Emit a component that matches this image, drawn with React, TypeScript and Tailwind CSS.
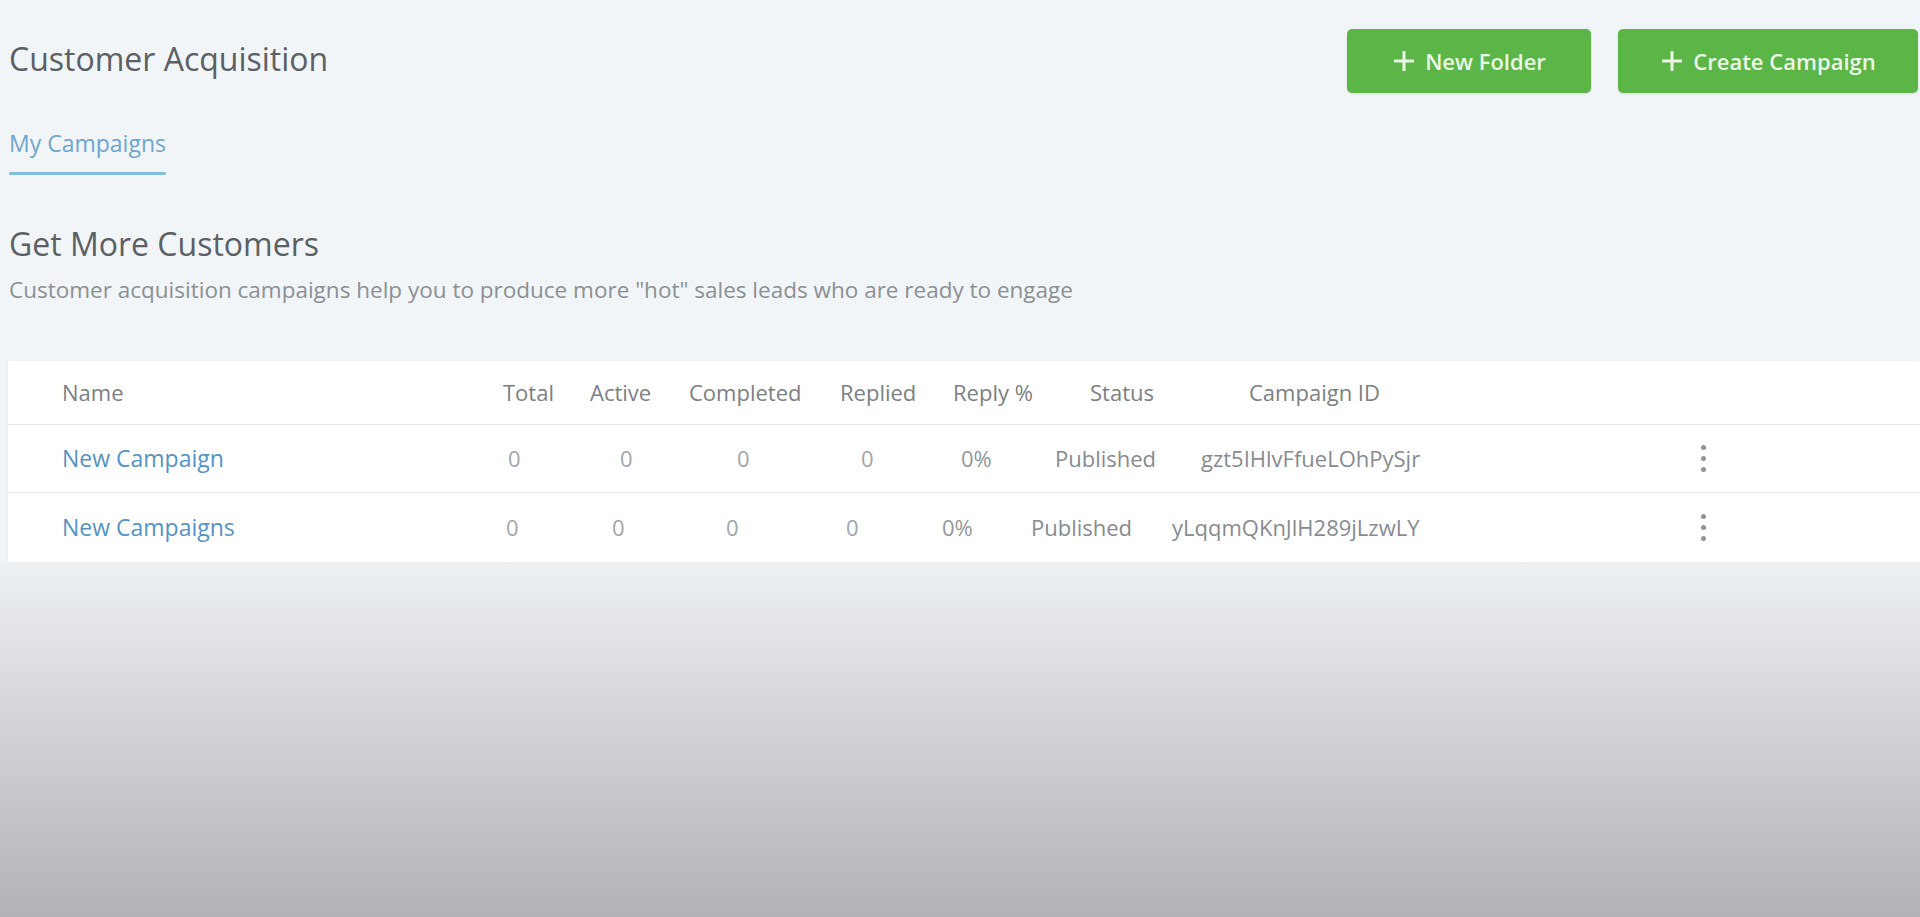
import { Fragment } from "react"

const font = { fontFamily: '"Open Sans", "Noto Sans", sans-serif' }

interface Campaign {
  name: string
  total: number
  active: number
  completed: number
  replied: number
  replyPct: string
  status: string
  campaignId: string
  widths: string[]
}

const campaigns: Campaign[] = [
  {
    name: "New Campaign",
    total: 0,
    active: 0,
    completed: 0,
    replied: 0,
    replyPct: "0%",
    status: "Published",
    campaignId: "gzt5IHlvFfueLOhPySjr",
    widths: ["w-[446px]", "w-[112px]", "w-[117px]", "w-[124px]", "w-[100px]", "w-[94px]", "w-[146px]", "w-[500px]"],
  },
  {
    name: "New Campaigns",
    total: 0,
    active: 0,
    completed: 0,
    replied: 0,
    replyPct: "0%",
    status: "Published",
    campaignId: "yLqqmQKnJlH289jLzwLY",
    widths: ["w-[444px]", "w-[106px]", "w-[114px]", "w-[120px]", "w-[96px]", "w-[89px]", "w-[141px]", "w-[529px]"],
  },
]

const headers = [
  { label: "Name", w: "w-[441px]" },
  { label: "Total", w: "w-[87px]" },
  { label: "Active", w: "w-[99px]" },
  { label: "Completed", w: "w-[151px]" },
  { label: "Replied", w: "w-[113px]" },
  { label: "Reply %", w: "w-[137px]" },
  { label: "Status", w: "w-[159px]" },
  { label: "Campaign ID", w: "w-[200px]" },
]

function PlusIcon() {
  return (
    <svg width="24" height="24" viewBox="0 0 24 24" fill="none" stroke="currentColor" strokeWidth="3" strokeLinecap="butt">
      <path d="M12 2v20M2 12h20" />
    </svg>
  )
}

function GreenButton({ label, width }: { label: string; width: string }) {
  return (
    <button
      className={`${width} flex h-[64px] items-center justify-center gap-[9px] rounded-[5px] bg-[#5cb547] text-[22px] font-semibold text-[#eaf7e6] shadow-[0_1px_2px_rgba(0,0,0,0.12)]`}
    >
      <PlusIcon />
      <span>{label}</span>
    </button>
  )
}

function Kebab() {
  return (
    <div className="flex flex-col items-center gap-[6px]">
      <span className="block h-[5px] w-[5px] rounded-full bg-[#8f9296]" />
      <span className="block h-[5px] w-[5px] rounded-full bg-[#8f9296]" />
      <span className="block h-[5px] w-[5px] rounded-full bg-[#8f9296]" />
    </div>
  )
}

export default function App() {
  return (
    <div className="flex min-h-[917px] w-[1920px] flex-col overflow-hidden bg-[#f2f5f7]" style={font}>
      <div className="pl-[9px]">
        {/* page header */}
        <div className="flex items-start justify-between pr-[2px] pt-[29px]">
          <h1 className="mt-[10px] text-[32px] leading-[40px] font-normal text-[#5b6065]">Customer Acquisition</h1>
          <div className="flex gap-[27px]">
            <GreenButton label="New Folder" width="w-[244px]" />
            <GreenButton label="Create Campaign" width="w-[300px]" />
          </div>
        </div>

        {/* tabs */}
        <div className="mt-[35px] flex">
          <div className="flex flex-col">
            <span className="text-[23px] leading-[30px] text-[#6ea6cd]">My Campaigns</span>
            <span className="mt-[14px] block h-[3px] w-full rounded-full bg-[#7fbfd9]" />
          </div>
        </div>

        {/* intro */}
        <h2 className="mt-[49px] text-[32px] leading-[40px] font-normal text-[#5b6065]">Get More Customers</h2>
        <p className="mt-[11px] text-[22.5px] leading-[30px] text-[#8b9094]">
          Customer acquisition campaigns help you to produce more "hot" sales leads who are ready to engage
        </p>
      </div>

      {/* table */}
      <div className="mt-[56px] ml-[8px] bg-white shadow-[0_1px_3px_rgba(0,0,0,0.08)]">
        <div className="flex h-[64px] items-center border-b border-[#e6e9ec] pl-[54px] text-[22px] text-[#7b8084]">
          {headers.map((h) => (
            <div key={h.label} className={`${h.w} shrink-0`}>
              {h.label}
            </div>
          ))}
        </div>
        {campaigns.map((c, i) => (
          <Fragment key={c.campaignId}>
            <div
              className={
                i === 0
                  ? "flex h-[68px] items-center border-b border-[#e3e6e9] pl-[54px] text-[22px]"
                  : "flex h-[69px] items-center pl-[54px] text-[22px]"
              }
            >
              <div className={`${c.widths[0]} shrink-0 text-[23px] font-medium text-[#5593c2]`}>{c.name}</div>
              <div className={`${c.widths[1]} shrink-0 text-[#a2a6aa]`}>{c.total}</div>
              <div className={`${c.widths[2]} shrink-0 text-[#a2a6aa]`}>{c.active}</div>
              <div className={`${c.widths[3]} shrink-0 text-[#a2a6aa]`}>{c.completed}</div>
              <div className={`${c.widths[4]} shrink-0 text-[#a2a6aa]`}>{c.replied}</div>
              <div className={`${c.widths[5]} shrink-0 text-[#93979b]`}>{c.replyPct}</div>
              <div className={`${c.widths[6]} shrink-0 text-[#878b8f]`}>{c.status}</div>
              <div className={`${c.widths[7]} shrink-0 text-[#878b8f]`}>{c.campaignId}</div>
              <Kebab />
            </div>
          </Fragment>
        ))}
      </div>

      {/* fading backdrop below the list */}
      <div className="flex-1 bg-linear-to-b from-[#eef1f3] via-[#cfd1d5] to-[#b2b3b7]" />
    </div>
  )
}
